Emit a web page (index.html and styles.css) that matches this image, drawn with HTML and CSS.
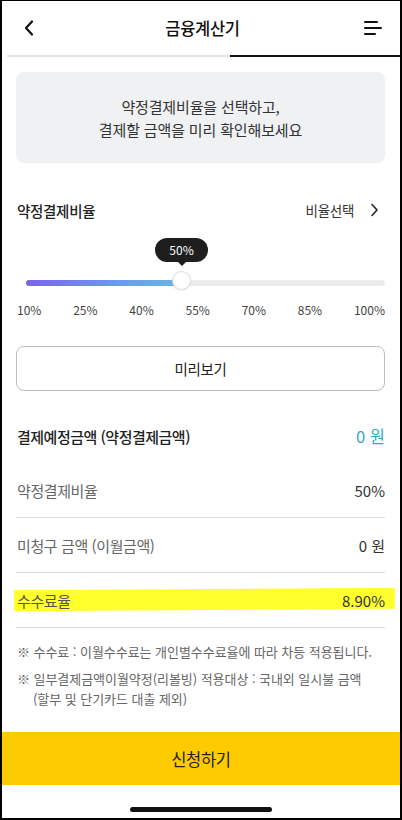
FILE: index.html
```html
<!DOCTYPE html>
<html lang="ko">
<head>
<meta charset="utf-8">
<title>금융계산기</title>
<link rel="stylesheet" href="styles.css">
</head>
<body>
<div class="frame">
  <header class="header">
    <svg class="icon-back" width="12" height="16" viewBox="0 0 12 16"><path d="M9 1.5 L3 8 L9 14.5" fill="none" stroke="#111" stroke-width="2.2" stroke-linecap="round" stroke-linejoin="round"/></svg>
    <h1 class="title">금융계산기</h1>
    <svg class="icon-menu" width="18" height="16" viewBox="0 0 18 16"><path d="M1 2 H13 M1 8 H17 M1 14 H11" fill="none" stroke="#111" stroke-width="2" stroke-linecap="round"/></svg>
  </header>
  <div class="progress"><span class="progress-rest"></span><span class="progress-done"></span></div>

  <main class="content">
    <div class="intro">
      <p>약정결제비율을 선택하고,</p>
      <p>결제할 금액을 미리 확인해보세요</p>
    </div>

    <div class="section-head">
      <h2 class="section-title">약정결제비율</h2>
      <span class="select-link">비율선택
        <svg width="9" height="14" viewBox="0 0 9 14"><path d="M2 1.5 L7 7 L2 12.5" fill="none" stroke="#222" stroke-width="1.6" stroke-linecap="round" stroke-linejoin="round"/></svg>
      </span>
    </div>

    <div class="slider">
      <div class="track"><div class="track-fill"></div></div>
      <div class="thumb"></div>
      <div class="tooltip">50%</div>
    </div>
    <div class="ticks">
      <span>10%</span><span>25%</span><span>40%</span><span>55%</span><span>70%</span><span>85%</span><span>100%</span>
    </div>

    <button class="preview-btn">미리보기</button>

    <div class="total-row">
      <span class="total-label">결제예정금액 (약정결제금액)</span>
      <span class="total-value">0 원</span>
    </div>

    <ul class="rows">
      <li class="row"><span class="row-label">약정결제비율</span><span class="row-value">50%</span></li>
      <li class="row"><span class="row-label">미청구 금액 (이월금액)</span><span class="row-value">0 원</span></li>
      <li class="row row-marked"><span class="row-label">수수료율</span><span class="row-value">8.90%</span></li>
    </ul>

    <div class="notes">
      <p class="note">※ 수수료 : 이월수수료는 개인별수수료율에 따라 차등 적용됩니다.</p>
      <p class="note">※ 일부결제금액이월약정(리볼빙) 적용대상 : 국내외 일시불 금액<br>(할부 및 단기카드 대출 제외)</p>
    </div>
  </main>

  <button class="apply-btn">신청하기</button>
  <div class="home-area"><span class="home-indicator"></span></div>
</div>
</body>
</html>
```
FILE: styles.css
```css
* { box-sizing: border-box; }
html, body { margin: 0; padding: 0; background: #fff; }
body {
  font-family: "Noto Sans CJK KR", "Noto Sans", sans-serif;
  color: #222;
}
p, h1, h2, ul { margin: 0; padding: 0; }
ul { list-style: none; }

.frame {
  width: 402px;
  height: 820px;
  border-style: solid;
  border-color: #000;
  border-width: 1px 2px 2px 2px;
  display: flex;
  flex-direction: column;
  overflow: hidden;
}

.header {
  height: 54px;
  display: flex;
  align-items: center;
  justify-content: space-between;
  padding: 0 18px 0 21px;
}
.title {
  font-size: 16.5px;
  font-weight: 500;
  letter-spacing: -0.3px;
  color: #111;
  margin-left: 6px;
}
.icon-back { display: block; }
.icon-menu { display: block; }

.progress {
  height: 2px;
  display: flex;
  padding-left: 5px;
}
.progress-rest { flex: 1; background: #e4e4e4; }
.progress-done { width: 170px; background: #111; }

.content {
  padding: 0 15px 0 14px;
}

.intro {
  margin-top: 15px;
  height: 91px;
  background: #eff1f3;
  border-radius: 8px;
  display: flex;
  flex-direction: column;
  align-items: center;
  justify-content: center;
  font-size: 15px;
  line-height: 23px;
  color: #333;
  letter-spacing: -0.15px;
}

.section-head {
  margin-top: 35px;
  height: 24px;
  display: flex;
  align-items: center;
  justify-content: space-between;
}
.section-title {
  font-size: 14.5px;
  font-weight: 500;
  color: #222;
  letter-spacing: -0.3px;
  padding-left: 1px;
}
.select-link {
  display: flex;
  align-items: center;
  gap: 16px;
  font-size: 13.5px;
  color: #333;
  padding-right: 6px;
  letter-spacing: -0.3px;
}
.select-link svg { display: block; }

.slider {
  position: relative;
  margin-top: 16px;
  padding-top: 42px;
}
.track {
  margin-left: 10px;
  height: 6px;
  border-radius: 3px;
  background: #ececec;
}
.track-fill {
  width: 155px;
  height: 6px;
  border-radius: 3px;
  background: linear-gradient(90deg, #7a66e2 0%, #6b9be6 60%, #6db5e6 100%);
}
.thumb {
  position: absolute;
  left: 156px;
  top: 33px;
  width: 19px;
  height: 19px;
  border-radius: 50%;
  background: #fff;
  border: 1px solid #dedede;
  box-shadow: 0 1px 2px rgba(0,0,0,0.08);
}
.tooltip {
  position: absolute;
  left: 139px;
  top: 0;
  width: 53px;
  height: 24px;
  border-radius: 12px;
  background: #1e1e1e;
  color: #fff;
  font-size: 12px;
  line-height: 24px;
  text-align: center;
}
.tooltip::after {
  content: "";
  position: absolute;
  left: 50%;
  bottom: -4px;
  margin-left: -5px;
  border-left: 5px solid transparent;
  border-right: 5px solid transparent;
  border-top: 5px solid #1e1e1e;
}

.ticks {
  margin-top: 16px;
  display: flex;
  justify-content: space-between;
  font-size: 12px;
  line-height: 16px;
  color: #444;
  padding-left: 1px;
}

.preview-btn {
  display: block;
  width: 100%;
  margin-top: 28px;
  height: 45px;
  border: 1px solid #bdbdbd;
  border-radius: 8px;
  background: #fff;
  font-family: inherit;
  font-size: 14.5px;
  color: #222;
  letter-spacing: -0.3px;
}

.total-row {
  margin-top: 33px;
  height: 24px;
  display: flex;
  align-items: center;
  justify-content: space-between;
  padding-left: 1px;
}
.total-label {
  font-size: 15px;
  font-weight: 500;
  color: #222;
  letter-spacing: -0.5px;
}
.total-value {
  font-size: 16.5px;
  color: #35a8c8;
}

.rows { margin-top: 15px; }
.row {
  position: relative;
  display: flex;
  justify-content: space-between;
  align-items: center;
  padding: 17px 0 15px 1px;
  line-height: 22px;
  border-bottom: 1px solid #dcdcdc;
}
.row-label {
  position: relative;
  font-size: 15px;
  color: #666;
  letter-spacing: -0.4px;
}
.row-value {
  position: relative;
  font-size: 15px;
  color: #333;
}
.row-marked::before {
  content: "";
  position: absolute;
  left: -2px;
  right: -10px;
  top: 16px;
  height: 21px;
  background: #ffff2e;
  transform: rotate(-0.35deg);
}
.row-marked .row-label { color: #555; }

.notes {
  margin-top: 14px;
  font-size: 13px;
  line-height: 20px;
  color: #666;
  letter-spacing: -0.05px;
}
.note {
  padding-left: 17px;
  text-indent: -16px;
}
.note + .note { margin-top: 7px; }

.apply-btn {
  display: block;
  width: 100%;
  margin-top: 23px;
  height: 53px;
  border: 0;
  background: #fecb00;
  font-family: inherit;
  font-size: 16.5px;
  color: #222;
  letter-spacing: -0.3px;
}

.home-area {
  flex: 1;
  display: flex;
  justify-content: center;
  align-items: flex-start;
  padding-top: 22px;
}
.home-indicator {
  width: 142px;
  height: 5px;
  border-radius: 3px;
  background: #111;
}
```
